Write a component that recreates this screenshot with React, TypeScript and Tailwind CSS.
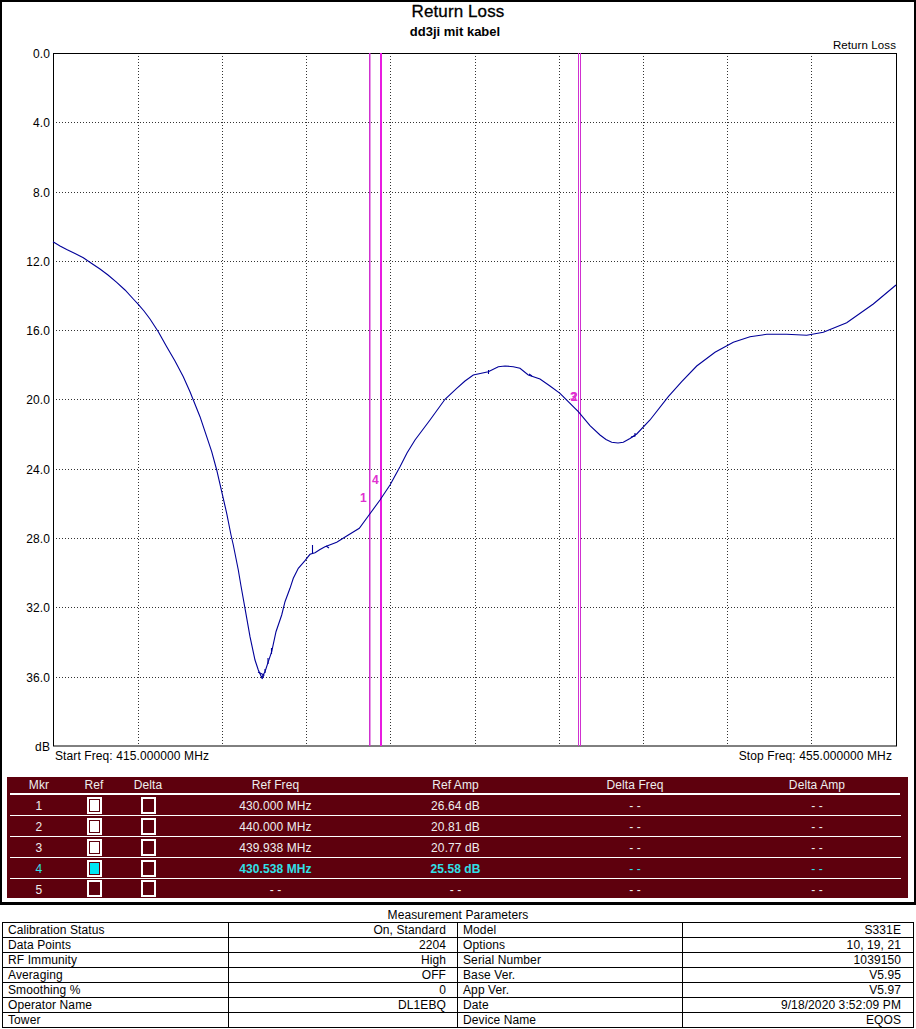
const curve =
  '53,241.8 60,246 66.7,249.5 75,253.5 83.3,257.7 91,263 100,269 108,275 116.7,282.3 125,290 133.3,299 138.3,304.3 144,311 150,319 158.3,331.7 166.7,346.7 175,361 183.3,376.7 190,391.7 193.3,400 200,416.7 206.7,436.7 211.7,451.7 216.7,470 221.7,491.7 226.7,513.3 231,535 233.3,545 238.3,570 241,586 245,608.3 250,636.7 255,660 258.3,670 261.7,677.5 265,671.7 268.3,661.7 271.7,651.7 276,631.7 281.7,615 285,601.7 290,588.3 293.3,578.3 298.3,568.3 305,560.7 310,554.3 315,552.7 320,549.5 325,546.7 336.7,542.3 346.7,536 359.3,528.3 368.3,516 380,500 390,485 400,466.7 407,453 415,440 430,420 445,399.3 456.7,388.3 465,381 473.3,375 488.3,371.7 498.3,366.7 505,366 513.3,366.7 520,368.3 528.3,375 540,379 550,386 560,393.3 578.3,411.7 590,425.7 600,435 606,439.5 611.7,442.3 618,443 623.3,442.3 630,438.5 636.7,434 650,420 668.3,396.7 681.7,381.7 696.7,366 715,352.3 733.3,342.3 750,336.7 766.7,334.3 786.7,334.3 806.7,335.3 823.3,332.3 846.7,322.7 873.3,304 896,285';

// little noise bumps on the trace
const noise = [
  'M312.5 545V554',
  'M258 672L264 675L262 679',
  'M265 669V673',
  'M268 658V664',
  'M271.5 648V654',
  'M326 546L329 548',
  'M488.5 370V374',
  'M529 374L532 376',
  'M635 433V436L631 437',
];

const yLabels = ['0.0', '4.0', '8.0', '12.0', '16.0', '20.0', '24.0', '28.0', '32.0', '36.0', 'dB'];
const gridX = [138, 222, 306, 390, 475, 559, 643, 727, 811];
const gridY = [122, 192, 261, 330, 399, 469, 538, 607, 677];

const markers = [
  { mkr: '1', ref: true, freq: '430.000 MHz', amp: '26.64 dB' },
  { mkr: '2', ref: true, freq: '440.000 MHz', amp: '20.81 dB' },
  { mkr: '3', ref: true, freq: '439.938 MHz', amp: '20.77 dB' },
  { mkr: '4', ref: true, freq: '430.538 MHz', amp: '25.58 dB', active: true },
  { mkr: '5', ref: false, freq: '- -', amp: '- -' },
];

const params = [
  ['Calibration Status', 'On, Standard', 'Model', 'S331E'],
  ['Data Points', '2204', 'Options', '10, 19, 21'],
  ['RF Immunity', 'High', 'Serial Number', '1039150'],
  ['Averaging', 'OFF', 'Base Ver.', 'V5.95'],
  ['Smoothing %', '0', 'App Ver.', 'V5.97'],
  ['Operator Name', 'DL1EBQ', 'Date', '9/18/2020 3:52:09 PM'],
  ['Tower', '', 'Device Name', 'EQOS'],
];

const markerCols = 'grid grid-cols-[58px_52px_56px_199px_161px_198px_166px] items-center text-center';

function Chart() {
  return (
    <svg width={845} height={695} viewBox="52 52 845 695" className="block shrink-0">
      {gridY.map((y) => (
        <line key={y} x1={53} x2={896} y1={y + 0.5} y2={y + 0.5} stroke="#333" strokeDasharray="1 2" />
      ))}
      {gridX.map((x) => (
        <line key={x} x1={x + 0.5} x2={x + 0.5} y1={53} y2={746} stroke="#333" strokeDasharray="1 2" />
      ))}
      <rect x={53.5} y={53.5} width={843} height={692.5} fill="none" stroke="#000" />
      <line x1={369.75} x2={369.75} y1={53} y2={746} stroke="#d030d0" strokeWidth={1.5} />
      <line x1={381} x2={381} y1={53} y2={746} stroke="#e81ce0" strokeWidth={2} />
      <line x1={578.5} x2={578.5} y1={53} y2={746} stroke="#d030d0" />
      <line x1={580.5} x2={580.5} y1={53} y2={746} stroke="#d030d0" />
      <polyline points={curve} fill="none" stroke="#000099" strokeWidth={1.1} />
      <path d={noise.join(' ')} fill="none" stroke="#000099" strokeWidth={1.1} />
      <g fill="#e030d0" fontFamily="'Liberation Sans', sans-serif" fontSize={12} fontWeight={700} textAnchor="middle">
        <text x={363.5} y={502}>1</text>
        <text x={375.5} y={483.5}>4</text>
        <text x={573.5} y={400.5}>3</text>
        <text x={574.5} y={400.5}>2</text>
      </g>
    </svg>
  );
}

function Check({ on, active }: { on?: boolean; active?: boolean }) {
  return (
    <div className="mx-auto h-[17px] w-[15px] border-2 border-white p-px">
      {on && <div className={active ? 'h-full w-full bg-[#00e6f5]' : 'h-full w-full bg-white'} />}
    </div>
  );
}

export default function App() {
  return (
    <div className="flex h-[1029px] w-[916px] flex-col overflow-hidden bg-white font-['Liberation_Sans',sans-serif] text-[12px] leading-[14px] tracking-[0.1px] text-black">
      <div className="flex h-[905px] shrink-0 flex-col border-x-2 border-t-2 border-b-[3px] border-black">
        <div className="h-[22px] pt-px text-center text-[17px] leading-[18px] [-webkit-text-stroke:0.3px_black]">Return Loss</div>
        <div className="h-[16px] pt-px pr-[6px] text-center text-[13px] leading-[14px] font-bold tracking-normal">dd3ji mit kabel</div>
        <div className="h-[12px] pr-[18px] text-right text-[11.5px] leading-[10px]">Return Loss</div>
        <div className="flex">
          <div className="-mt-[5px] -mb-[7px] flex h-[707px] w-[50px] shrink-0 flex-col justify-between pr-[2px] text-right">
            {yLabels.map((l) => (
              <span key={l}>{l}</span>
            ))}
          </div>
          <Chart />
        </div>
        <div className="mt-[2px] flex justify-between pr-[22px] pl-[53px]">
          <span>Start Freq: 415.000000 MHz</span>
          <span>Stop Freq: 455.000000 MHz</span>
        </div>
        <div className="mx-[5px] mt-[14px] h-[121px] w-[901px] bg-[#5e000d] text-[#eee]">
          <div className={`${markerCols} mx-[3px] h-[18px] w-[890px] border-b-2 border-white`}>
            <span>Mkr</span>
            <span>Ref</span>
            <span>Delta</span>
            <span>Ref Freq</span>
            <span>Ref Amp</span>
            <span>Delta Freq</span>
            <span>Delta Amp</span>
          </div>
          {markers.map((m) => (
            <div
              key={m.mkr}
              className={`${markerCols} mx-[3px] w-[891px] ${m.mkr === '5' ? 'h-[19px]' : 'h-[21px] border-b border-white'} ${m.active ? 'font-bold text-[#30e0e8]' : ''}`}
            >
              <span className="pt-[2px] font-normal">{m.mkr}</span>
              <Check on={m.ref} active={m.active} />
              <Check />
              <span className="pt-[2px]">{m.freq}</span>
              <span className="pt-[2px]">{m.amp}</span>
              <span className="pt-[2px] font-normal">- -</span>
              <span className="pt-[2px] font-normal">- -</span>
            </div>
          ))}
        </div>
      </div>
      <div className="h-[17px] pt-[3px] text-center">Measurement Parameters</div>
      <div className="mx-[2px] w-[912px] border-t border-l border-black">
        {params.map((row) => (
          <div key={row[0]} className="grid h-[15px] grid-cols-[226px_229px_225px_231px]">
            <span className="border-r border-b border-black pl-[5px]">{row[0]}</span>
            <span className="border-r border-b border-black pr-[11px] text-right">{row[1]}</span>
            <span className="border-r border-b border-black pl-[5px]">{row[2]}</span>
            <span className="border-r border-b border-black pr-[12px] text-right">{row[3]}</span>
          </div>
        ))}
      </div>
    </div>
  );
}
